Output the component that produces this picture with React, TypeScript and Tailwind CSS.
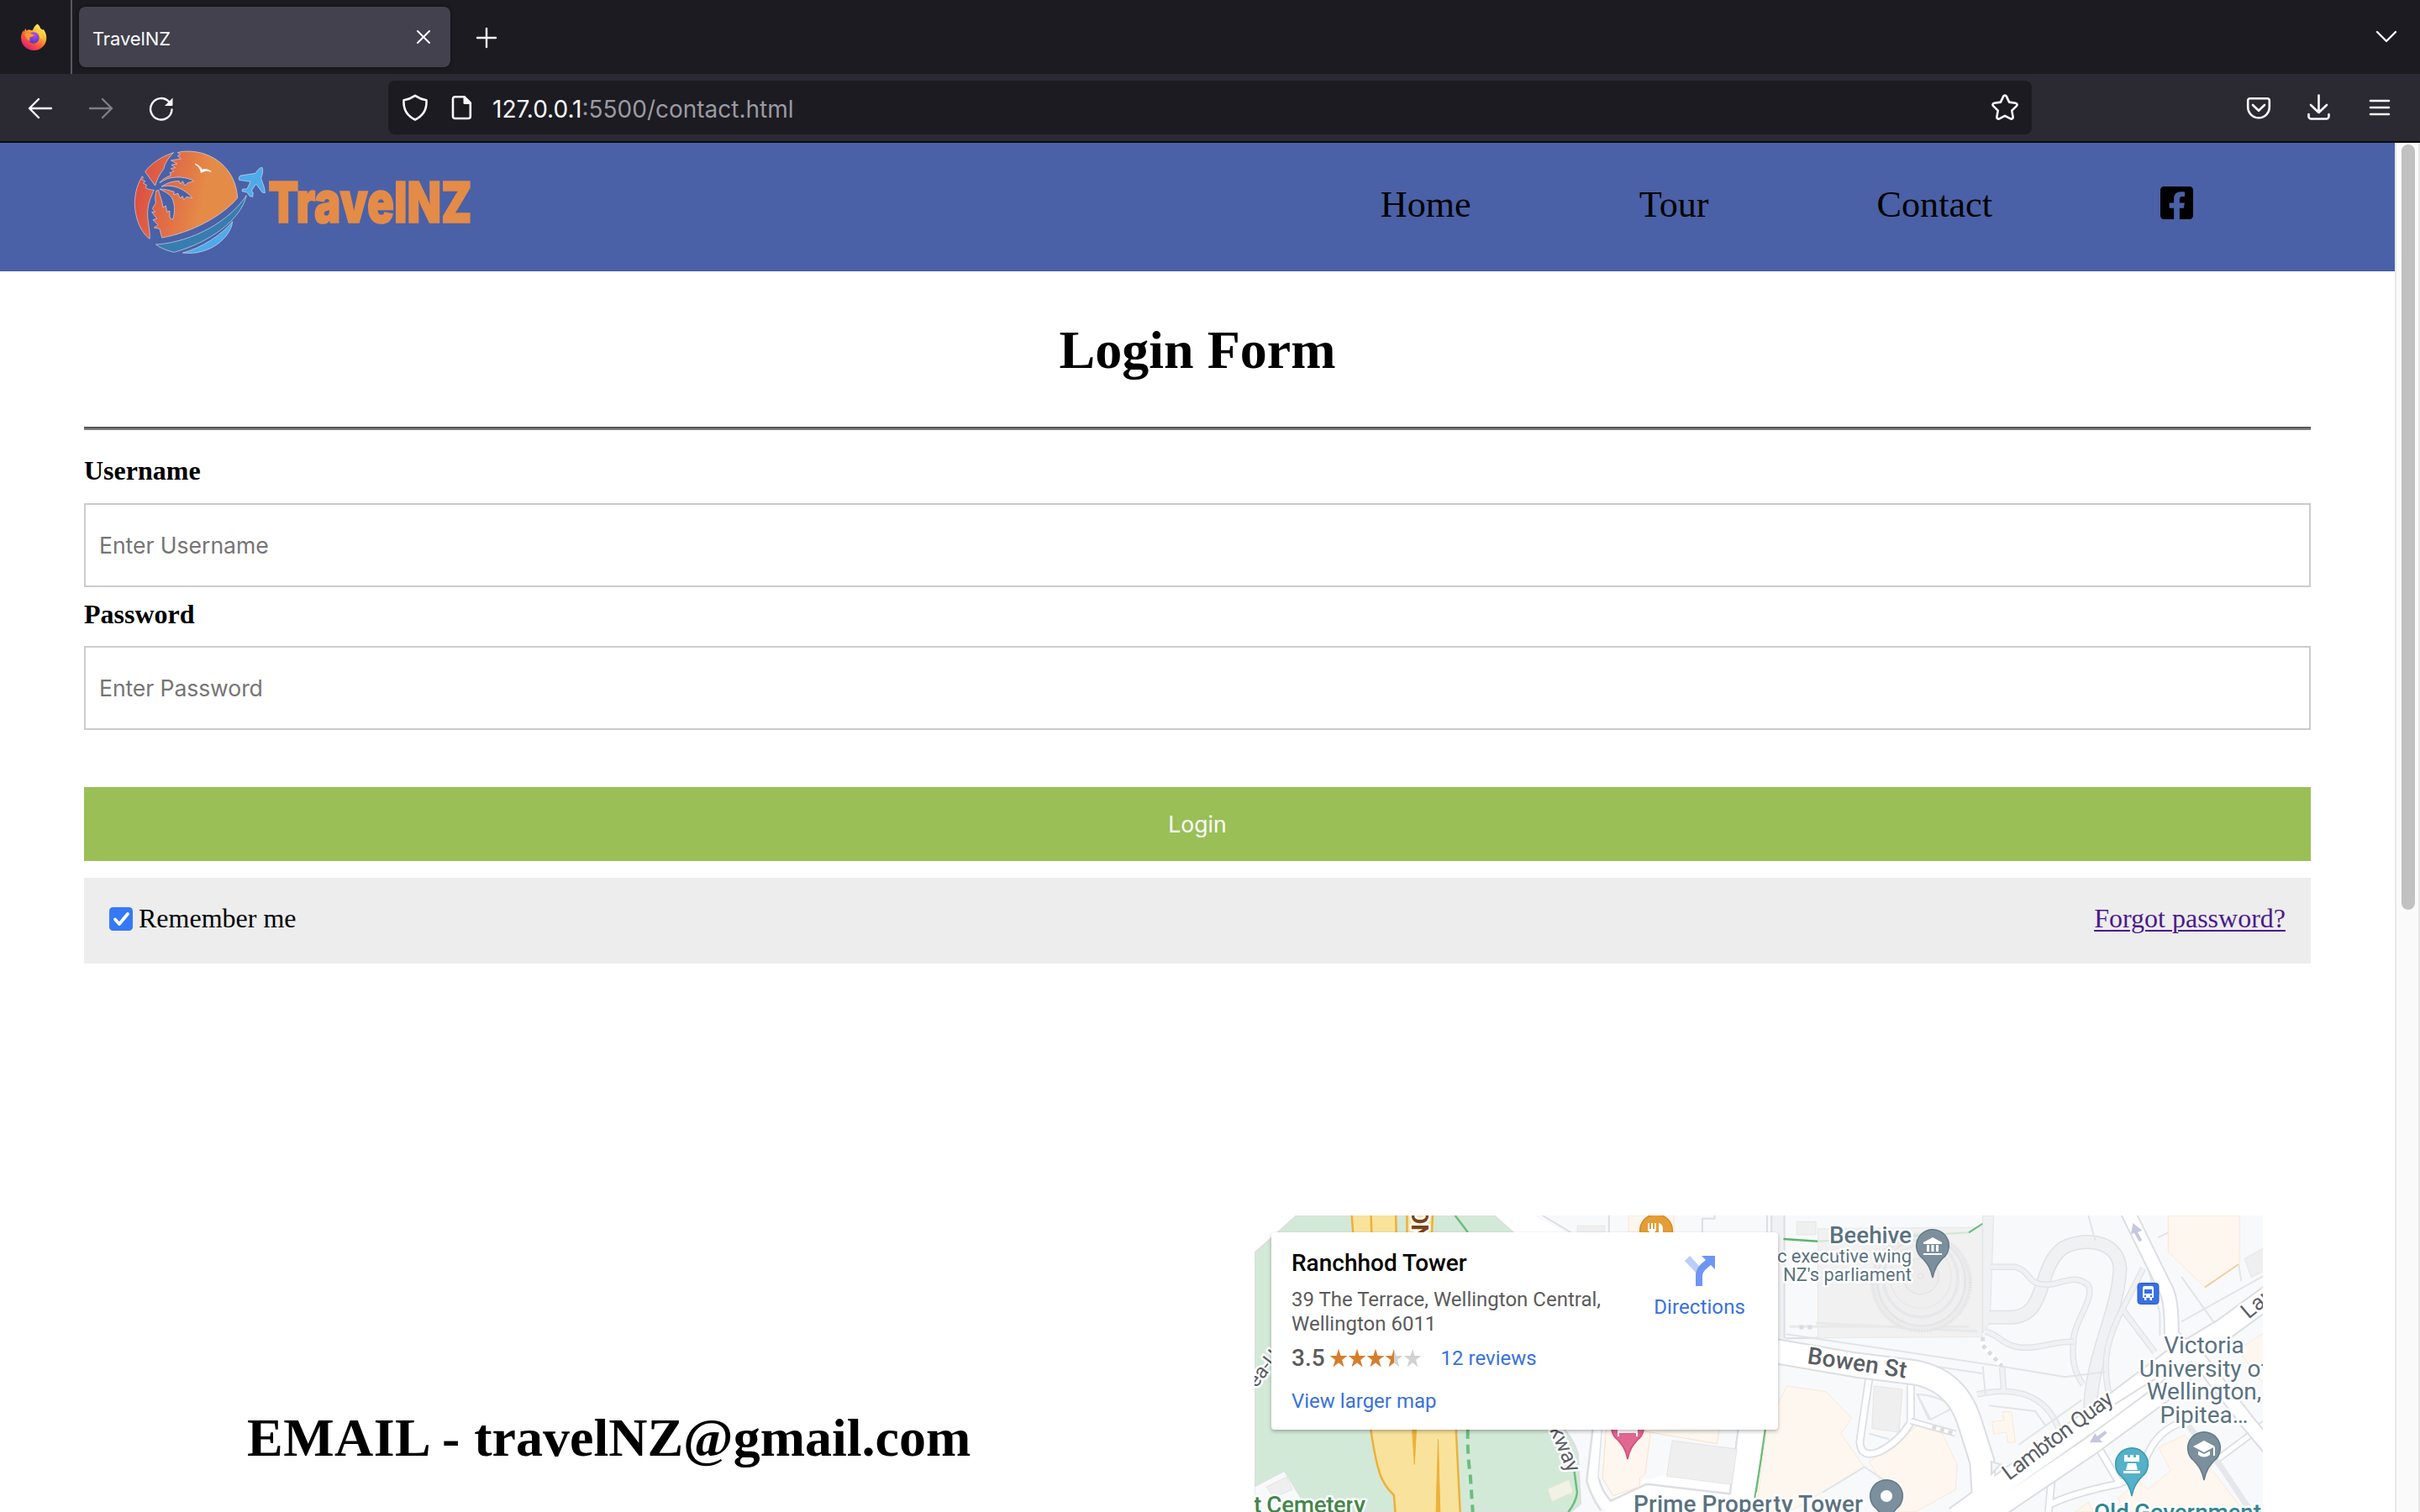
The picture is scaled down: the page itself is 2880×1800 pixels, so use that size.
import React from "react";
import { FaFacebookSquare } from "react-icons/fa";

function FirefoxLogo() {
  return (
    <svg className="h-8 w-8" viewBox="0 0 32 32">
      <defs>
        <linearGradient id="ffBody" x1="0.85" y1="0.1" x2="0.25" y2="0.95">
          <stop offset="0" stopColor="#fff36b" />
          <stop offset="0.35" stopColor="#ffb02e" />
          <stop offset="0.65" stopColor="#ff5a3c" />
          <stop offset="1" stopColor="#d8206f" />
        </linearGradient>
        <radialGradient id="ffGlobe" cx="0.6" cy="0.2" r="0.9">
          <stop offset="0" stopColor="#b44af5" />
          <stop offset="1" stopColor="#4a3ab0" />
        </radialGradient>
      </defs>
      <path d="M20.5 .5c2 1.6 3.2 3.6 3.8 5.4 1.400.6 2.200 1.300 2.800 2.100l.3-1.600c2.500 3.300 3.900 6.700 3.900 10.500C31.300 25.500 24.500 32 16.200 32S1 25.500 1 17c0-3.700 1.500-7 3-8.800L4.500 10l1.800-4.300 1.200 2.800L10 7.300c1.800.2 3.300.4 4.200 1.200 1.500-1 2-5.500 6.300-8z" fill="url(#ffBody)" />
      <circle cx="16" cy="17" r="6.700" fill="url(#ffGlobe)" />
      <path d="M5 13c3-2.500 8-1.500 11.500.8-1 2.200-4 1.400-5 3.200-.8 1.800.5 4 .5 4-3-.8-5-4-7-8z" fill="#ff9a2e" />
      <path d="M19 8c4 1.500 7 5 6.500 10" stroke="#ffcf3a" strokeWidth="3" fill="none" />
    </svg>
  );
}

const line = {
  fill: "none",
  stroke: "#fbfbfe",
  strokeWidth: 2.4,
  strokeLinecap: "round" as const,
  strokeLinejoin: "round" as const,
};

function TabBar() {
  return (
    <div className="flex h-[88px] items-center bg-[#1c1b22]">
      <div className="flex h-full w-[84px] items-center pl-6">
        <FirefoxLogo />
      </div>
      <div className="h-full w-[2px] bg-[#5a5961]" />
      <div className="ml-2 flex h-[72px] w-[442px] items-center rounded-lg bg-[#42414d] pl-4 pr-6 shadow-[0_0_4px_rgba(0,0,0,0.5)]">
        <span className="grow pt-1 text-[22px] tracking-[-0.1px] text-[#fbfbfe]">TravelNZ</span>
        <svg className="h-4 w-4" viewBox="0 0 16 16">
          <path d="M1 1l14 14M15 1L1 15" {...line} strokeWidth={2} />
        </svg>
      </div>
      <svg className="ml-[30px] mt-[2px] h-[26px] w-[26px]" viewBox="0 0 26 26">
        <path d="M13 2v22M2 13h22" {...line} />
      </svg>
      <svg className="ml-auto mr-[27px] h-4 w-[26px]" viewBox="0 0 26 16">
        <path d="M2 2l11 11L24 2" {...line} />
      </svg>
    </div>
  );
}

function Toolbar() {
  return (
    <div className="flex h-[82px] items-center border-b-2 border-[#0c0c0d] bg-[#2b2a33]">
      <svg className="ml-8 h-8 w-8" viewBox="0 0 32 32">
        <path d="M29 17H3M14 6L3 17l11 11" {...line} />
      </svg>
      <svg className="ml-10 h-8 w-8 opacity-40" viewBox="0 0 32 32">
        <path d="M3 17h26M18 6l11 11-11 11" {...line} />
      </svg>
      <svg className="ml-10 h-8 w-8" viewBox="0 0 32 32">
        <path d="M28.500 18.500A12.700 12.700 0 1 1 25 9" {...line} />
        <path d="M29.500 4.500V13a1 1 0 0 1-1 1h-8.500z" fill="#fbfbfe" />
      </svg>
      <div className="ml-[254px] flex h-16 w-[1956px] items-center rounded-lg bg-[#1c1b22]">
        <svg className="ml-4 h-8 w-8" viewBox="0 0 32 32">
          <path d="M16 1.800c4 2.700 8.500 4.700 13.400 5.400.8 9.800-3 18.300-13.400 23.300C5.600 25.500 1.800 17 2.600 7.200 7.500 6.500 12 4.500 16 1.800z" {...line} strokeWidth={2.600} />
        </svg>
        <svg className="ml-6 h-8 w-8" viewBox="0 0 32 32">
          <path d="M8.500 3.200h10l7.300 7.300v16a2.500 2.500 0 0 1-2.500 2.500H7.500a2.500 2.500 0 0 1-2.500-2.500v-20.800a2.500 2.500 0 0 1 2.500-2.500z" {...line} strokeWidth={2.600} />
          <path d="M17.500 3.200v7.300a1.500 1.500 0 0 0 1.500 1.500h7.500z" fill="#fbfbfe" />
        </svg>
        <span className="ml-[20px] pt-[3px] text-[28px] text-[#9b9aa1]">
          <span className="text-[#fbfbfe]">127.0.0.1</span>:5500/contact.html
        </span>
        <svg className="ml-auto mr-4 h-8 w-8" viewBox="0 0 32 32">
          <path d="M14.200 2.600a2 2 0 0 1 3.600 0l3.300 7 7.700 1.100a2 2 0 0 1 1.100 3.400l-5.600 5.500 1.300 7.700a2 2 0 0 1-2.900 2.100L16 25.800l-6.700 3.600a2 2 0 0 1-2.900-2.100l1.300-7.700-5.600-5.500a2 2 0 0 1 1.100-3.400l7.700-1.100z" {...line} strokeWidth={2.600} />
        </svg>
      </div>
      <svg className="ml-auto h-8 w-8" viewBox="0 0 32 32">
        <path d="M5.500 5.200h21a2.300 2.300 0 0 1 2.300 2.300v8a12.800 12.800 0 0 1-25.600 0v-8a2.300 2.300 0 0 1 2.300-2.300zM9 13l7 6.800 7-6.800" {...line} strokeWidth={2.600} />
      </svg>
      <svg className="ml-10 h-8 w-8" viewBox="0 0 32 32">
        <path d="M15.500 1.500v20M6 13l9.500 9 9.500-9M3.500 24v2.500a3 3 0 0 0 3 3h18a3 3 0 0 0 3-3V24" {...line} strokeWidth={2.600} />
      </svg>
      <svg className="ml-10 mr-8 h-8 w-8" viewBox="0 0 32 32">
        <path d="M5 8h22M5 16h22M5 24h22" {...line} strokeWidth={2.600} />
      </svg>
    </div>
  );
}

function TravelLogo() {
  return (
    <svg className="ml-[140px] h-[145px] w-[440px]" viewBox="0 15 1320 435">
      <defs>
        <linearGradient id="sun" x1="80" y1="160" x2="400" y2="230" gradientUnits="userSpaceOnUse">
          <stop offset="0" stopColor="#dd5142" />
          <stop offset="0.72" stopColor="#e58b48" />
        </linearGradient>
      </defs>
      <g stroke="#d9dcea" strokeWidth="2" strokeLinejoin="round">
        <path fill="url(#sun)" d="M200 50C160 62 120 88 98 118L134 168C142 140 155 120 165 108C166 96 178 70 200 50z" />
        <path fill="url(#sun)" d="M88 134C66 170 58 210 62 250C68 300 86 336 114 358C118 330 106 300 107 262C108 230 122 200 130 184C118 184 108 180 100 176L104 166L92 160L98 152L86 146L92 140z" />
        <path fill="url(#sun)" d="M214 50C226 45 250 44 266 46C352 52 424 118 428 212C370 280 262 336 158 354L150 322L130 318L144 308L126 290L140 286L122 262L134 262L124 250L136 230C132 210 136 196 138 186L146 184C152 210 160 222 162 246L172 240L176 262L186 258L186 282L196 290C206 266 206 220 186 202C172 190 160 186 150 180C168 180 190 186 202 190L200 200L216 196L222 212L232 206L236 218L246 208L266 212C250 190 220 174 196 170C180 168 166 168 156 172C172 160 200 150 220 152L224 162L232 152L240 168L250 158L272 152C250 136 200 134 176 144C166 148 158 152 150 158C160 146 170 138 190 132L186 122L200 118L190 106L206 104L192 94L212 90L190 78L226 72L214 62L224 56z" />
        <path fill="#387db0" d="M136 378C230 374 380 320 460 203C440 290 330 370 202 406C176 400 154 392 136 378z" />
        <path fill="#4eabea" d="M232 408C300 390 370 345 410 296C406 350 330 420 232 408z" />
        <path fill="#4eabea" d="M516 103C506 104 500 112 492 124L438 132C432 138 432 144 434 148L474 154L462 180L446 180L444 188L462 192L472 206L482 208L484 194L478 186L494 162L516 192L526 194L524 176L512 142C518 126 520 112 516 103z" />
      </g>
      <path d="M276 90C288 94 298 102 302 112C312 106 322 110 334 118C320 114 310 114 298 122C296 108 288 98 276 90z" fill="#fff" stroke="#fff" strokeWidth="2" />
      <text x="538" y="300" fontFamily="Inter" fontWeight="900" fontSize="204" textLength="727" lengthAdjust="spacingAndGlyphs" fill="#e58b48" stroke="#e58b48" strokeWidth="5">
        TravelNZ
      </text>
    </svg>
  );
}

function SiteHeader() {
  return (
    <header className="flex h-[153px] justify-between bg-[#4a61a7]">
      <TravelLogo />
      <nav className="mr-[240px] flex h-[148px] items-center gap-[200px] text-[44.200px] text-black">
        <a>Home</a>
        <a>Tour</a>
        <a>Contact</a>
        <FaFacebookSquare className="-mt-[5px] h-[45px] w-[39px]" />
      </nav>
    </header>
  );
}

const edges = "#dcdee3";

function Pin({ x, y, fill, edge, children }: { x: number; y: number; fill: string; edge: string; children?: React.ReactNode }) {
  return (
    <g transform={`translate(${x} ${y})`}>
      <path d="M0 38C-2.500 26-6 22-11.500 15.500A19.300 19.300 0 1 1 11.500 15.500C6 22 2.500 26 0 38z" fill={fill} stroke={edge} strokeWidth="1.500" />
      {children}
    </g>
  );
}

const halo = { stroke: "#fff", strokeWidth: 5, paintOrder: "stroke" as const, strokeLinejoin: "round" as const };

function MapDrawing() {
  return (
    <svg className="block h-[353px] w-[1200px]" viewBox="0 0 1200 353" fontFamily="Roboto">
      <rect width="1200" height="353" fill="#f8f9fb" />

      {/* Western half: park, motorway and tower block */}
      <g transform="translate(-13 -17) scale(.4209 .33333)" fill="none" strokeWidth="2">
        <path d="M31 51H150L31 185z" fill="#fff" />
        <path vectorEffect="non-scaling-stroke" d="M150 51L31 185V1110H925L953 1080L945 900Q930 840 890 790L830 300L765 111L712 51z" fill="#d3e9d7" stroke="#dcdee3" />
        <path d="M712 51H820L912 111H765z" fill="#fff" />
        <path d="M845 51L925 111M1033 51V111M1297 111V62H1332V51" stroke={edges} vectorEffect="non-scaling-stroke" />
        <path d="M944 88H1021V111H944z" fill="#efefef" stroke="#e3e3e5" />
        <path d="M1088 51H1217V111H1088z" fill="#fdf6ee" stroke="#fbe3cb" />
        <path d="M1480 51V111M1526 51V111" stroke={edges} vectorEffect="non-scaling-stroke" />
        <path d="M1494 51H1528V500H1494z" fill="#f0f1f3" />
        <g stroke="#eeb03a" fill="#f9e39c" strokeWidth="2.500">
          <path vectorEffect="non-scaling-stroke" d="M305 40L310 120H432L430 40z" />
          <path vectorEffect="non-scaling-stroke" d="M462 40V120H532L535 40z" />
          <path vectorEffect="non-scaling-stroke" d="M360 40L362 120" />
          <path vectorEffect="non-scaling-stroke" d="M358 800Q368 900 383 965Q395 1015 425 1050L430 1130H613L600 800z" />
          <path vectorEffect="non-scaling-stroke" strokeWidth="1" d="M476 800L483 940L489 800M544 1130L550 850L556 1130" fill="#eeb03a" />
        </g>
        <path vectorEffect="non-scaling-stroke" d="M598 51L634 111M935 965L943 1040Q940 1075 918 1110" stroke="#6dbd7c" strokeWidth="2.500" />
        <path vectorEffect="non-scaling-stroke" d="M634 815Q632 900 641 980L648 1110" stroke="#6dbd7c" strokeWidth="4" strokeDasharray="11 7" />
        <path d="M860 1028L920 995L930 1040L872 1072z" fill="#f1f2e6" stroke="#f3e3cd" />
        <path d="M31 1020L115 965L185 1110H31z" fill="#f8f9fb" stroke={edges} />
        <path d="M65 1020L122 985L138 1030L85 1058z" fill="#efefef" stroke={edges} />
        <path d="M985 800H1568V1110H1030L1000 1075L970 1010z" fill="#fff" />
        <path d="M987 815L970 1000Q985 1060 1010 1105M1014 815L1004 985Q1010 1030 1038 1070L1140 1010L1375 1045L1398 815" stroke={edges} strokeWidth="2.500" vectorEffect="non-scaling-stroke" />
        <path d="M1014 815L1004 985L1038 1065L1120 1000L1200 975L1370 1010L1396 815z" fill="#f8f9fb" />
        <path d="M1025 815L1015 990L1045 1052L1120 1020V990L1135 975L1152 815z" fill="#fdf7f0" stroke="#f9d9b8" />
        <path d="M1135 815H1345L1338 866L1135 822z" fill="#fdf7f0" stroke="#f9d9b8" />
        <path d="M1212 855L1395 885L1380 1012L1196 982z" fill="#efefef" stroke="#dfdfe2" />
        <path d="M1477 815L1445 1060" stroke="#6dbd7c" vectorEffect="non-scaling-stroke" />
      </g>

      {/* Eastern half: parliament grounds and the quay */}
      <g transform="translate(597 -17) scale(.3954 .33333)" fill="none" strokeWidth="2">
        <path d="M46 51H85V490H46z" fill="#f0f1f3" />
        <path d="M46 51V490M85 51V490M88 490L186 488" stroke={edges} vectorEffect="non-scaling-stroke" />
        <path d="M122 73H180V120H122z" fill="#efefef" stroke="#e1e1e3" />
        <path d="M186 98L680 93V485L186 488z" fill="#f1f1f1" stroke="#e3e3e5" />
        <path d="M100 448H640M180 435L665 465" stroke="#e9e9ea" strokeWidth="3" vectorEffect="non-scaling-stroke" />
        <ellipse cx="497" cy="290" rx="148" ry="174" fill="#ececed" stroke="#e2e2e3" strokeWidth="10" strokeDasharray="4 4" />
        <ellipse cx="497" cy="285" rx="132" ry="160" fill="#efefef" stroke="#e4e5e8" strokeWidth="7" />
        <ellipse cx="495" cy="275" rx="112" ry="138" stroke="#e6e7eb" strokeWidth="9" />
        <ellipse cx="495" cy="270" rx="92" ry="112" stroke="#e8e8e9" strokeWidth="4" />
        <ellipse cx="495" cy="268" rx="54" ry="64" fill="#ededed" stroke="#e1e2e4" strokeWidth="3" />
        <circle cx="495" cy="268" r="9" stroke="#dcdcdd" />
        <path d="M82 135L185 143" stroke="#5cb56d" strokeWidth="2.500" vectorEffect="non-scaling-stroke" />
        <path d="M185 143L640 112L662 95" stroke="#cfe6d3" strokeWidth="2" vectorEffect="non-scaling-stroke" />
        <path d="M640 112L682 80" stroke="#6dbd7c" vectorEffect="non-scaling-stroke" />
        <path d="M682 51H715L705 390L700 440L682 470z" fill="#f0f1f3" stroke={edges} />

        {/* Garden paths */}
        {[
          "M700 415H760C880 415 840 250 920 170C970 130 1090 130 1095 240C1090 400 1005 560 1005 760",
          "M705 235H780C830 250 810 300 880 298C930 290 960 260 1000 300C1020 350 955 430 955 500C950 560 955 610 985 655",
          "M690 465C740 480 740 525 820 523C870 520 900 500 955 502",
          "M740 590L745 675M665 690C780 660 870 690 910 810",
          "M1165 240L1105 380C1060 480 1040 560 1060 680M1105 390L1200 540",
        ].map((d, i) => (
          <g key={i}>
            <path d={d} stroke="#dfe2e5" strokeWidth={i === 0 ? 17 : 7.500} vectorEffect="non-scaling-stroke" />
            <path d={d} stroke="#f0f1f3" strokeWidth={i === 0 ? 14 : 5} vectorEffect="non-scaling-stroke" />
          </g>
        ))}
        <path d="M90 475L740 590L930 628L1050 610M682 590L690 690M700 730L840 750L870 800M1000 51L1020 140M1160 150L1215 400V480M1280 430L1568 240M1280 270L1400 470M1210 130L1340 51M1440 130L1460 285M790 870L980 710M540 590L680 615" stroke="#e2e4e7" strokeWidth="2" vectorEffect="non-scaling-stroke" />
        <path d="M682 485V515L740 590" stroke="#fff" strokeWidth="6" vectorEffect="non-scaling-stroke" />
        <path d="M682 485V515L740 590M130 450H175" stroke="#dcdcde" strokeWidth="5" strokeDasharray="5 5" vectorEffect="non-scaling-stroke" />

        {/* Commercial blocks */}
        <g fill="#fdf7f0" stroke="#fbe2c8" strokeWidth="2">
          <path d="M92 660L210 680L287 775L255 830L325 948L100 1110H0L30 815z" />
          <path d="M490 793L560 830L605 940L600 1030L480 1110H430L340 930L440 850z" />
          <path d="M1240 51H1455V225L1350 308L1240 180z" />
          <path d="M742 752H768L780 860L757 862L753 825L715 832L710 788L745 783z" />
          <path d="M1568 440L1450 530L1530 660L1568 690z" />
          <path d="M1212 880L1290 835L1470 1110H1100L1090 1060L1150 1000L1180 1028L1248 962z" />
          <path d="M960 1110L1000 1075L1015 1110z" />
        </g>
        <path d="M1350 308L1452 225" stroke="#f2cfa4" strokeWidth="2" vectorEffect="non-scaling-stroke" />
        <path d="M1470 205L1568 140V225L1490 272z" fill="#efefef" stroke="#dfdfe2" />
        <path d="M355 660L440 672L430 825L348 812z" fill="#efefef" stroke="#dfdfe2" />
        <path d="M485 690Q560 695 590 740L525 780zM325 948L390 1000M200 1040L325 950M520 780L485 690M340 830L400 850" stroke="#e2e4e7" vectorEffect="non-scaling-stroke" />

        {/* Streets */}
        {[
          ["M340 630L312 860Q315 920 370 895Q430 860 465 790V650", 9],
          ["M465 785L600 830", 7],
          ["M1020 860L1095 1010M890 980L880 1110M880 1085Q960 1040 1090 1010Q1150 980 1180 900Q1210 820 1280 790", 9],
          ["M1390 920L1470 850L1568 760", 8],
        ].map(([d, w], i) => (
          <g key={i}>
            <path d={d as string} stroke={edges} strokeWidth={(w as number) + 1} vectorEffect="non-scaling-stroke" />
            <path d={d as string} stroke="#fff" strokeWidth={(w as number) - 2.500} vectorEffect="non-scaling-stroke" />
          </g>
        ))}
        {[edges, "#fff"].map((c, i) => (
          <g key={c} stroke={c} strokeLinejoin="round">
            <path d="M20 528L300 585L480 612Q600 640 640 780L680 930L690 1130" strokeWidth={i ? 27 : 31} vectorEffect="non-scaling-stroke" />
            <path d="M600 1130L780 975L1060 740L1250 570L1410 455L1600 290" strokeWidth={i ? 24 : 28} vectorEffect="non-scaling-stroke" />
            <path d="M700 1120L1000 880L1230 680L1300 600" strokeWidth={i ? 20 : 24} vectorEffect="non-scaling-stroke" />
            <path d="M1115 30L1235 320Q1252 360 1250 500" strokeWidth={i ? 15 : 19} vectorEffect="non-scaling-stroke" />
            <path d="M1250 480L1330 560L1480 790L1600 960" strokeWidth={i ? 15 : 19} vectorEffect="non-scaling-stroke" />
          </g>
        ))}
        <path d="M1300 800L1400 950L1490 1110" stroke="#e6e7ea" strokeWidth="7" vectorEffect="non-scaling-stroke" />
        <path d="M530 805L595 830" stroke="#dcdcde" strokeWidth="5" strokeDasharray="5 5" vectorEffect="non-scaling-stroke" />
        <path d="M735 940L708 930V975zM1080 725L1200 635" fill="#f5f6f8" stroke={edges} vectorEffect="non-scaling-stroke" />
        <path d="M27 815L0 1040" stroke="#6dbd7c" vectorEffect="non-scaling-stroke" />
        <path d="M1134 78L1162 105L1148 110L1162 140L1152 144L1138 114L1128 118zM1004 862L1020 828L1026 840L1050 820L1056 828L1034 850L1042 862z" fill="#c5c8dc" />
      </g>

      {/* Labels */}
      <g {...halo} fontSize="28" fill="#5a7280">
        <g textAnchor="end">
          <text x="782" y="32.500" fontWeight="500" textLength="98">Beehive</text>
          <text x="782" y="55.500" fontSize="22" textLength="160">c executive wing</text>
          <text x="782" y="77.500" fontSize="22" textLength="153">NZ's parliament</text>
        </g>
        <g textAnchor="middle">
          <text x="1130" y="164">Victoria</text>
          <text x="1130" y="191.500">University of</text>
          <text x="1130" y="219">Wellington,</text>
          <text x="1130" y="247">Pipitea…</text>
        </g>
        <text x="451" y="352.500" fontWeight="500" textLength="273">Prime Property Tower</text>
        <text x="-1" y="354" fontWeight="500" textLength="133" fill="#43864a">t Cemetery</text>
        <text x="999" y="362.500" fontWeight="500" textLength="199" fill="#2f8791">Old Government</text>
        <g fill="#5b5e64">
          <text transform="translate(657 176) rotate(8.500)" fontWeight="500" textLength="119">Bowen St</text>
          <text transform="translate(898 316) rotate(-36.800)" fontSize="26" textLength="157">Lambton Quay</text>
          <text transform="translate(1183 124) rotate(-40)" fontSize="26">Lam</text>
          <text transform="translate(351 255) rotate(67)" fontSize="25">kway</text>
          <text transform="translate(2 206) rotate(-52)" fontSize="24">ea-U</text>
        </g>
        <text transform="translate(187 -9) rotate(90)" fontWeight="700" fontSize="28" fill="#7a4318">ON</text>
      </g>

      <Pin x={807} y={36} fill="#7c8f9c" edge="#637a89">
        <path d="M-11-4L0-10L11-4V-2H-11zM-7-1h3v8h-3zM-1.500-1h3v8h-3zM4-1h3v8h-3zM-11 9h22v2h-22z" fill="#fff" />
      </Pin>
      <Pin x={1130} y={277} fill="#7c8f9c" edge="#637a89">
        <path d="M-13-2L0-9L13-2L0 5zM-7 3.500L0 7l7-3.500V8Q0 13-7 8zM11-1h2V9h-2z" fill="#fff" />
      </Pin>
      <Pin x={1044} y={296} fill="#54b1c9" edge="#3a98a8">
        <path d="M-9-11h4v3h3v-3h4v3h3v-3h4V-3H-9zM-5-1H5L7 7H-7zM-10 8H10V11H-10z" fill="#fff" />
      </Pin>
      <Pin x={752} y={334} fill="#7c8f9c" edge="#637a89">
        <circle r="7" fill="#fff" />
      </Pin>
      <Pin x={444} y={252} fill="#e0678f" edge="#d94878">
        <path d="M-12-6V11h2V7H10v4h2V0H-8V-6z" fill="#fff" />
      </Pin>
      <Pin x={478} y={18} fill="#e49d37" edge="#d68a22">
        <path d="M-10-9h2v7h2v-7h2v7h2v-7h2V0l-3 3v10h-3V3l-4-3zM3-9q5 1 5 7v15H5V4H3z" fill="#fff" />
      </Pin>
      <rect x="1051" y="80.500" width="25" height="25" rx="3.500" fill="#3871e0" stroke="#2a5bc4" />
      <path d="M1057 86q0-2 2.500-2h8q2.500 0 2.500 2v12h-2v3h-2.500v-3h-4v3h-2.500v-3h-2z" fill="#fff" />
      <path d="M1059 88h9v5h-9zM1059 95h2v2h-2zM1066 95h2v2h-2z" fill="#3871e0" />
    </svg>
  );
}

const STAR = "M11 0l2.700 8H22l-6.700 5 2.600 8.200L11 16.200 4.100 21.200 6.700 13 0 8h8.300z";

function Stars() {
  return (
    <svg className="ml-[5px] h-[22px] w-[110px]" viewBox="0 0 110 22">
      <clipPath id="scored">
        <rect width="77" height="22" />
      </clipPath>
      {[0, 22, 44, 66, 88].map((x) => (
        <path key={x} d={STAR} transform={`translate(${x + 0.8} 0) scale(.93 1)`} fill="#d2d2d2" />
      ))}
      <g clipPath="url(#scored)">
        {[0, 22, 44, 66].map((x) => (
          <path key={x} d={STAR} transform={`translate(${x + 0.8} 0) scale(.93 1)`} fill="#d67d2b" />
        ))}
      </g>
    </svg>
  );
}

function PlaceCard() {
  return (
    <div className="absolute left-5 top-5 flex h-[235px] w-[603px] justify-between rounded-[4px] bg-white pl-6 pr-[39px] font-[Roboto] text-[24px] leading-[29px] text-[#5b5b5b] shadow-[0_2px_4px_rgba(0,0,0,0.28)]">
      <div className="flex flex-col pt-[21px]">
        <div className="text-[28px] font-medium leading-[32px] text-black">Ranchhod Tower</div>
        <div className="mt-[13px] w-[400px]">39 The Terrace, Wellington Central, Wellington 6011</div>
        <div className="mt-[10px] flex items-center">
          <span className="text-[28px] font-medium leading-[30px]">3.5</span>
          <Stars />
          <span className="ml-[23px] pt-[2px] text-[#3871e0]">12 reviews</span>
        </div>
        <div className="mt-[22px] text-[#3871e0]">View larger map</div>
      </div>
      <div className="flex flex-col items-center pt-7">
        <svg className="h-9 w-9" viewBox="0 0 36 36">
          <path d="M0 6L6 0L17 12L13 20z" fill="#bccdfa" />
          <path d="M13 36V23Q13 16 19 10L25 5L20 0H36V16L31 11L25 16Q21 20 21 24V36z" fill="#6f95f5" />
        </svg>
        <span className="mt-[11px] tracking-[0.1px] text-[#3871e0]">Directions</span>
      </div>
    </div>
  );
}

function LoginForm() {
  return (
    <form className="flex flex-col px-[100px] pt-[58px] text-[32px] leading-[36px] text-black">
      <h1 className="text-center text-[64px] font-bold leading-[72px]">Login Form</h1>
      <div className="mt-[55px] h-1 border-t-2 border-[#565656] bg-[#808080]" />
      <label className="mt-[30px] font-bold">Username</label>
      <input
        className="mt-[21px] h-[100px] border-2 border-[#cccccc] bg-white pl-4 font-[Inter] text-[26.600px] tracking-[-0.05px] placeholder:text-[#757575]"
        placeholder="Enter Username"
      />
      <label className="mt-[14px] font-bold">Password</label>
      <input
        className="mt-[20px] h-[100px] border-2 border-[#cccccc] bg-white pl-4 font-[Inter] text-[26.600px] tracking-[-0.1px] placeholder:text-[#757575]"
        placeholder="Enter Password"
      />
      <button type="button" className="mt-[68px] h-[88px] bg-[#9abf57] font-[Inter] text-[26.600px] text-white">
        Login
      </button>
      <div className="mt-5 flex h-[102px] items-center justify-between bg-[#ededed] px-[30px] pb-[5px]">
        <label className="flex items-center gap-[7px]">
          <svg className="h-7 w-7" viewBox="0 0 28 28">
            <rect width="28" height="28" rx="4.500" fill="#3579f7" />
            <path d="M7 14.500L12 20L22 8" fill="none" stroke="#fff" strokeWidth="3.800" strokeLinecap="round" strokeLinejoin="round" />
          </svg>
          <span className="pb-[2px]">Remember me</span>
        </label>
        <a className="mb-[2px] text-[#4b1a8c] underline decoration-2 underline-offset-[3px]">Forgot password?</a>
      </div>
    </form>
  );
}

export default function App() {
  return (
    <div className="flex h-[1800px] w-[2880px] flex-col overflow-hidden bg-white font-[Inter]">
      <TabBar />
      <Toolbar />
      <div className="flex min-h-0 grow">
        <main className="w-[2850px] overflow-hidden font-['Liberation_Serif']">
          <SiteHeader />
          <LoginForm />
          <section className="mt-[300px] flex">
            <div className="w-[1493px] pl-[294px] pt-[229px]">
              <h2 className="text-[64px] font-bold leading-[72px]">
                <span className="tracking-[0.45px]">EMAIL - </span>travelNZ@gmail.com
              </h2>
            </div>
            <div className="relative">
              <MapDrawing />
              <PlaceCard />
            </div>
          </section>
        </main>
        <div className="w-[30px] border-x-2 border-[#e8e8e8] bg-[#fafafa] pl-[6px] pt-[2px]">
          <div className="h-[911px] w-4 rounded-full bg-[#c1c1c1]" />
        </div>
      </div>
    </div>
  );
}
